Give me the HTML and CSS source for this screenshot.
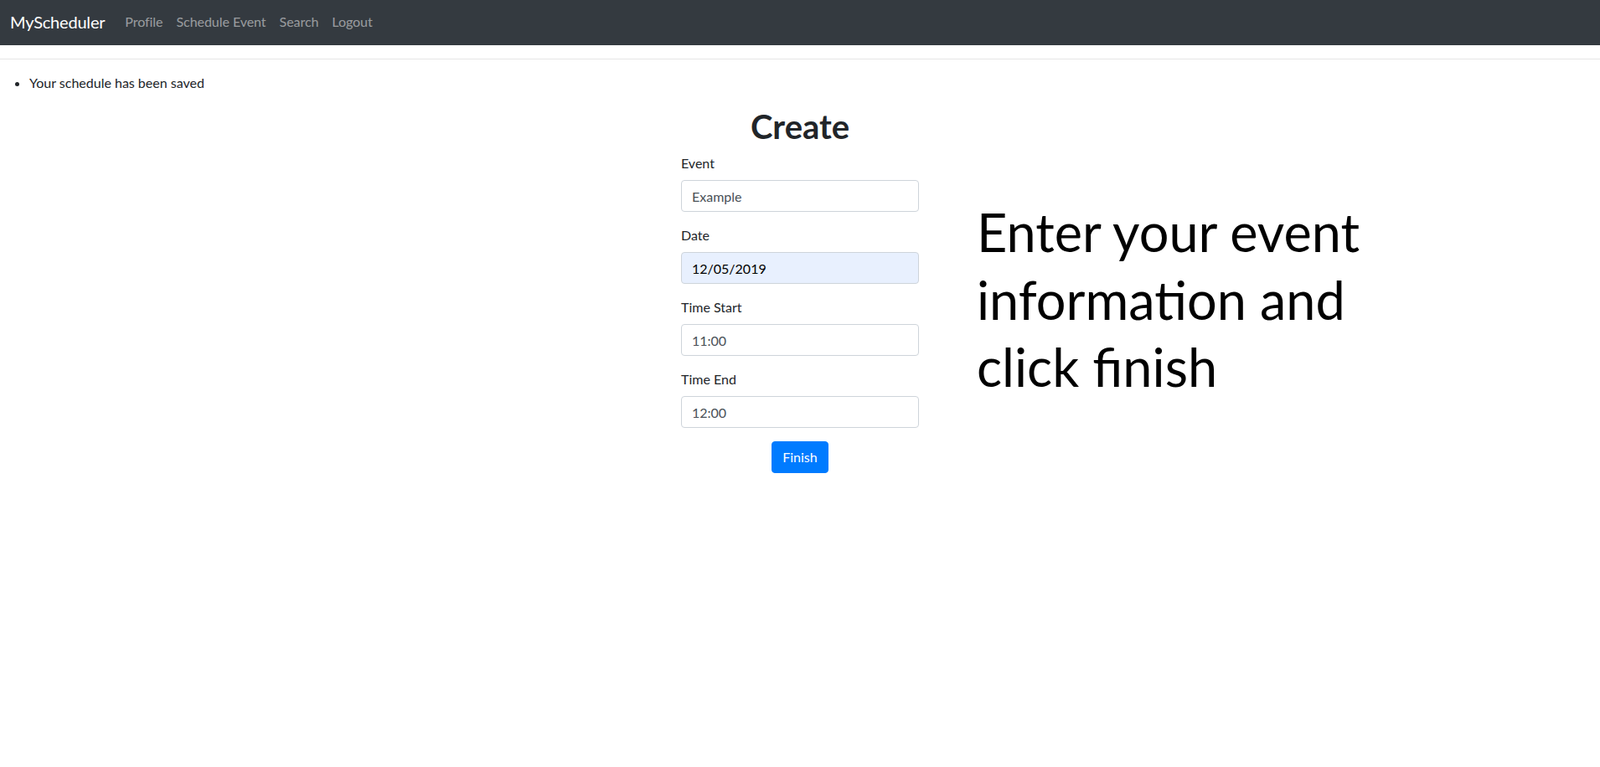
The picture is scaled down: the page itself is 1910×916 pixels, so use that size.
FILE: index.html
```html
<!DOCTYPE html>
<html lang="en">
<head>
<meta charset="utf-8">
<title>MyScheduler - Create</title>
<link rel="stylesheet" href="styles.css">
</head>
<body>
<nav class="navbar">
  <a class="brand" href="#">MyScheduler</a>
  <ul class="nav-links">
    <li><a href="#">Profile</a></li>
    <li><a href="#">Schedule Event</a></li>
    <li><a href="#">Search</a></li>
    <li><a href="#">Logout</a></li>
  </ul>
</nav>
<hr class="divider">
<ul class="messages">
  <li>Your schedule has been saved</li>
</ul>
<main class="create-layout">
  <div class="side"></div>
  <form class="create-form">
    <h1 class="title">Create</h1>
    <div class="form-group">
      <label class="label">Event</label>
      <input class="form-control" type="text" value="Example">
    </div>
    <div class="form-group">
      <label class="label">Date</label>
      <input class="form-control autofilled" type="text" value="12/05/2019">
    </div>
    <div class="form-group">
      <label class="label">Time Start</label>
      <input class="form-control" type="text" value="11:00">
    </div>
    <div class="form-group">
      <label class="label">Time End</label>
      <input class="form-control" type="text" value="12:00">
    </div>
    <div class="actions">
      <button class="btn-primary" type="button">Finish</button>
    </div>
  </form>
  <p class="instructions">Enter your event<br>information and<br>click finish</p>
</main>
</body>
</html>
```

FILE: styles.css
```css
* { box-sizing: border-box; }

html, body {
  margin: 0;
  padding: 0;
  background: #fff;
}

body {
  font-family: Lato, "Open Sans", "Liberation Sans", sans-serif;
  font-size: 16px;
  line-height: 1.5;
  color: #212529;
}

.navbar {
  height: 54px;
  background: #343a40;
  display: flex;
  align-items: center;
  padding: 0 12px;
}

.brand {
  font-size: 20px;
  line-height: 30px;
  color: #fff;
  text-decoration: none;
  margin-right: 16px;
  margin-top: -3px;
  letter-spacing: -0.2px;
}

.nav-links {
  display: flex;
  list-style: none;
  margin: 0;
  padding: 0;
}

.nav-links a {
  display: block;
  padding: 8px 8px;
  color: rgba(255, 255, 255, 0.5);
  text-decoration: none;
  font-size: 16px;
  line-height: 24px;
  margin-top: -3px;
  letter-spacing: -0.05px;
}

.divider {
  margin: 16px 0;
  border: 0;
  border-top: 1px solid rgba(0, 0, 0, 0.1);
  height: 0;
}

.messages {
  margin: 0 0 16px;
  padding-left: 35px;
}

.create-layout {
  display: grid;
  grid-template-columns: 1fr 284px 1fr;
  align-items: start;
}

.create-form {
  margin: 0 0 16px;
}

.title {
  margin: 0 0 8px;
  padding-top: 1px;
  font-size: 40px;
  line-height: 47px;
  font-weight: 700;
  text-align: center;
  color: #212529;
}

.form-group {
  margin-bottom: 16px;
}

.label {
  display: block;
  margin-bottom: 8px;
}

.form-control {
  display: block;
  width: 100%;
  height: 38px;
  padding: 6px 12px;
  font-family: inherit;
  font-size: 16px;
  line-height: 24px;
  color: #495057;
  background: #fff;
  border: 1px solid #ced4da;
  border-radius: 4px;
  outline: none;
}

.form-control.autofilled {
  background: #e8f0fe;
  color: #000;
}

.actions {
  display: flex;
  justify-content: center;
}

.btn-primary {
  font-family: inherit;
  font-size: 16px;
  line-height: 24px;
  padding: 6px 12px;
  color: #fff;
  background: #007bff;
  border: 1px solid #007bff;
  border-radius: 4px;
}

.instructions {
  margin: 0;
  padding: 110px 0 0 69px;
  font-size: 63px;
  line-height: 80.5px;
  color: #000;
}
```
